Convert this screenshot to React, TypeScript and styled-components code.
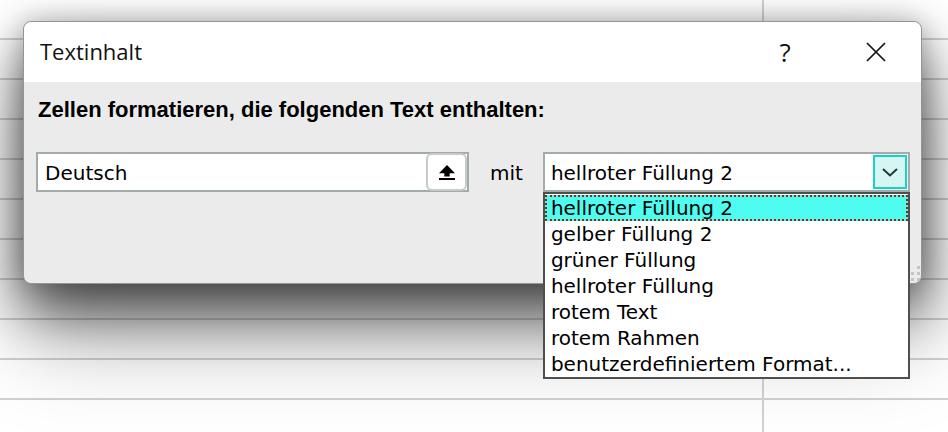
import styled, { createGlobalStyle } from "styled-components";

const GlobalStyle = createGlobalStyle`
    html, body {
        margin: 0;
        padding: 0;
        background: #ffffff;
    }
    * {
        box-sizing: border-box;
    }
`

const Sheet = styled.div`
    width: 948px;
    height: 432px;
    overflow: hidden;
    padding: 21px 0 0 23px;
    background-color: #ffffff;
    background-image:
        linear-gradient(to right, transparent 762px, #d2d2d2 762px, #d2d2d2 764px, transparent 764px),
        repeating-linear-gradient(to bottom, transparent 0px, transparent 38px, #d2d2d2 38px, #d2d2d2 40px);
`

const Dialog = styled.div`
    position: relative;
    width: 899px;
    height: 263px;
    border: 1px solid #959595;
    border-radius: 8px;
    background: #ebebeb;
    box-shadow:
        0 28px 56px rgba(0, 0, 0, 0.62),
        0 60px 90px rgba(0, 0, 0, 0.25),
        0 0 26px rgba(0, 0, 0, 0.22);
`

const TitleBar = styled.div`
    height: 60px;
    display: flex;
    align-items: center;
    padding: 0 22px 0 16px;
    gap: 45px;
    background: #ffffff;
    border-radius: 8px 8px 0 0;
`

const Title = styled.div`
    flex: 1;
    font-family: "Open Sans", "Noto Sans", sans-serif;
    font-size: 22px;
    color: #111111;
    padding-bottom: 2px;
`

const TitleButton = styled.div`
    width: 46px;
    height: 40px;
    display: flex;
    align-items: center;
    justify-content: center;
    font-family: "Open Sans", "Noto Sans", sans-serif;
    font-size: 26px;
    color: #111111;
`

const Body = styled.div`
    padding: 15px 0 0 12px;
`

const Heading = styled.div`
    padding-left: 2px;
    font-family: "Liberation Sans", Arial, sans-serif;
    font-weight: 700;
    font-size: 22px;
    line-height: 26px;
    color: #000000;
`

const Row = styled.div`
    display: flex;
    align-items: center;
    margin-top: 29px;
`

const Field = styled.div`
    width: 433px;
    height: 40px;
    display: flex;
    align-items: stretch;
    border: 2px solid #a3abab;
    background: #ffffff;
`

const FieldText = styled.div`
    flex: 1;
    padding: 2px 0 0 7px;
    display: flex;
    align-items: center;
    font-family: "DejaVu Sans", Verdana, sans-serif;
    font-size: 20px;
    color: #000000;
`

const PickButton = styled.div`
    width: 41px;
    display: flex;
    align-items: center;
    justify-content: center;
    border: 2px solid #c6caca;
    border-radius: 6px;
    background: #ffffff;
    margin: -1px 0;
`

const Label = styled.div`
    margin: 0 20px 0 21px;
    padding-top: 2px;
    font-family: "DejaVu Sans", Verdana, sans-serif;
    font-size: 20px;
    color: #000000;
`

const Select = styled.div`
    position: relative;
    width: 367px;
    height: 40px;
    display: flex;
    align-items: center;
    border: 2px solid #a3abab;
    background: #ffffff;
`

const SelectValue = styled.div`
    flex: 1;
    padding: 2px 0 0 6px;
    font-family: "DejaVu Sans", Verdana, sans-serif;
    font-size: 20px;
    color: #000000;
`

const ArrowBox = styled.div`
    width: 34px;
    height: 34px;
    margin-right: 1px;
    display: flex;
    align-items: center;
    justify-content: center;
    border: 2px solid #14d4c3;
    background: #d6f6f4;
`

const List = styled.div`
    position: absolute;
    z-index: 2;
    top: 38px;
    left: -2px;
    width: 367px;
    border: 2px solid #4f4f4f;
    background: #ffffff;
    padding-top: 1px;
`

const Item = styled.div<{ $active?: boolean }>`
    height: 26px;
    line-height: 22px;
    padding: 0 0 0 4px;
    font-family: "DejaVu Sans", Verdana, sans-serif;
    font-size: 20px;
    color: #000000;
    white-space: nowrap;
    border: 2px ${p => p.$active ? "dotted #8a2a0e" : "solid transparent"};
    background: ${p => p.$active ? "#4ffcf0" : "transparent"};
`

const Grip = styled.svg`
    position: absolute;
    right: 1px;
    bottom: 2px;
`

const options = [
    "hellroter Füllung 2",
    "gelber Füllung 2",
    "grüner Füllung",
    "hellroter Füllung",
    "rotem Text",
    "rotem Rahmen",
    "benutzerdefiniertem Format...",
];

function App() {
    return (
        <>
            <GlobalStyle />
            <Sheet>
                <Dialog>
                    <TitleBar>
                        <Title>Textinhalt</Title>
                        <TitleButton>?</TitleButton>
                        <TitleButton>
                            <svg width="20" height="20" viewBox="0 0 20 20">
                                <path d="M1 1 L19 19 M19 1 L1 19" stroke="#111" strokeWidth="1.7" fill="none" />
                            </svg>
                        </TitleButton>
                    </TitleBar>
                    <Body>
                        <Heading>Zellen formatieren, die folgenden Text enthalten:</Heading>
                        <Row>
                            <Field>
                                <FieldText>Deutsch</FieldText>
                                <PickButton>
                                    <svg width="16" height="15" viewBox="0 0 16 15">
                                        <polygon points="8,0 16,8.3 10.7,8.3 10.7,11.5 5.3,11.5 5.3,8.3 0,8.3" fill="#000" />
                                        <rect x="0" y="13" width="16" height="2" fill="#000" />
                                    </svg>
                                </PickButton>
                            </Field>
                            <Label>mit</Label>
                            <Select>
                                <SelectValue>hellroter Füllung 2</SelectValue>
                                <ArrowBox>
                                    <svg width="16" height="9" viewBox="0 0 16 9">
                                        <path d="M1 1 L8 7.5 L15 1" stroke="#2b3434" strokeWidth="2" fill="none" />
                                    </svg>
                                </ArrowBox>
                                <List>
                                    {options.map((o, i) => (
                                        <Item key={o} $active={i === 0}>{o}</Item>
                                    ))}
                                </List>
                            </Select>
                        </Row>
                    </Body>
                    <Grip width="16" height="16" viewBox="0 0 16 16">
                        <rect x="13" y="1" width="3" height="3" fill="#c4c4c4" />
                        <rect x="7" y="7" width="3" height="3" fill="#c4c4c4" />
                        <rect x="13" y="7" width="3" height="3" fill="#c4c4c4" />
                        <rect x="1" y="13" width="3" height="3" fill="#c4c4c4" />
                        <rect x="7" y="13" width="3" height="3" fill="#c4c4c4" />
                        <rect x="13" y="13" width="3" height="3" fill="#c4c4c4" />
                    </Grip>
                </Dialog>
            </Sheet>
        </>
    )
}

export default App;
